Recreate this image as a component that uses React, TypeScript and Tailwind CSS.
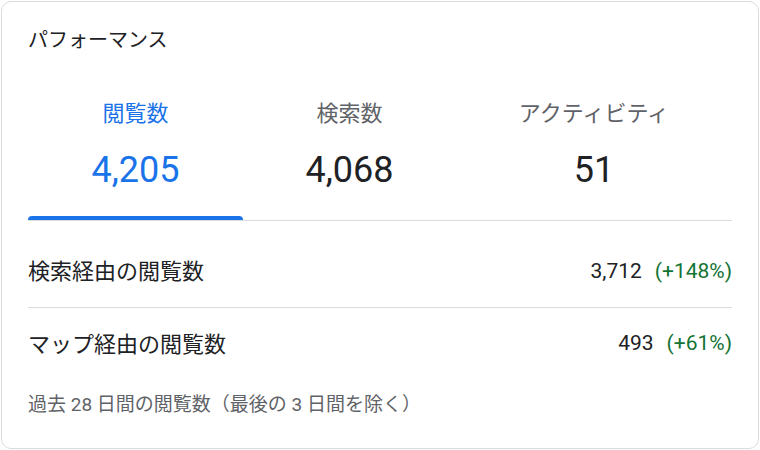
import React from 'react'

const jp = "font-['Roboto','Noto_Sans_CJK_JP',sans-serif]"

const tabs = [
  { label: '閲覧数', value: '4,205', width: 'w-[215px]', active: true },
  { label: '検索数', value: '4,068', width: 'w-[213px]', active: false },
  { label: 'アクティビティ', value: '51', width: 'flex-1', active: false },
]

const rows = [
  { label: '検索経由の閲覧数', value: '3,712', change: '(+148%)' },
  { label: 'マップ経由の閲覧数', value: '493', change: '(+61%)' },
]

export default function App() {
  return (
    <div className={`w-[760px] h-[450px] bg-white p-[1px] ${jp}`}>
      <div className='h-[448px] rounded-[10px] border border-[#dadce0] px-[26px] pt-[24px] flex flex-col'>
        <h2 className='text-[20px] leading-7 text-[#202124]'>パフォーマンス</h2>

        <div className='mt-[45px] flex border-b border-[#dadce0]'>
          {tabs.map((t) => (
            <div key={t.label} className={`${t.width} flex flex-col items-center relative pb-[30px]`}>
              <span className={`text-[22px] leading-[30px] ${t.active ? 'text-[#1a73e8]' : 'text-[#5f6368]'}`}>{t.label}</span>
              <span className={`mt-[21px] text-[36px] leading-10 ${t.active ? 'text-[#1a73e8]' : 'text-[#202124]'}`}>{t.value}</span>
              {t.active && <span className='absolute left-0 right-0 bottom-0 h-[4px] rounded-t-[4px] bg-[#1a73e8]' />}
            </div>
          ))}
        </div>

        <div className='mt-[15px]'>
          {rows.map((r, i) => (
            <div key={r.label} className={`h-[72px] flex items-center justify-between ${i === 0 ? 'border-b border-[#dadce0]' : ''}`}>
              <span className='text-[22px] text-[#202124]'>{r.label}</span>
              <span className='text-[21px] flex gap-[13px]'>
                <span className='text-[#202124]'>{r.value}</span>
                <span className='text-[#137333]'>{r.change}</span>
              </span>
            </div>
          ))}
        </div>

        <p className='mt-[13px] text-[19px] leading-6 text-[#5f6368]'>過去 28 日間の閲覧数（最後の 3 日間を除く）</p>
      </div>
    </div>
  )
}
